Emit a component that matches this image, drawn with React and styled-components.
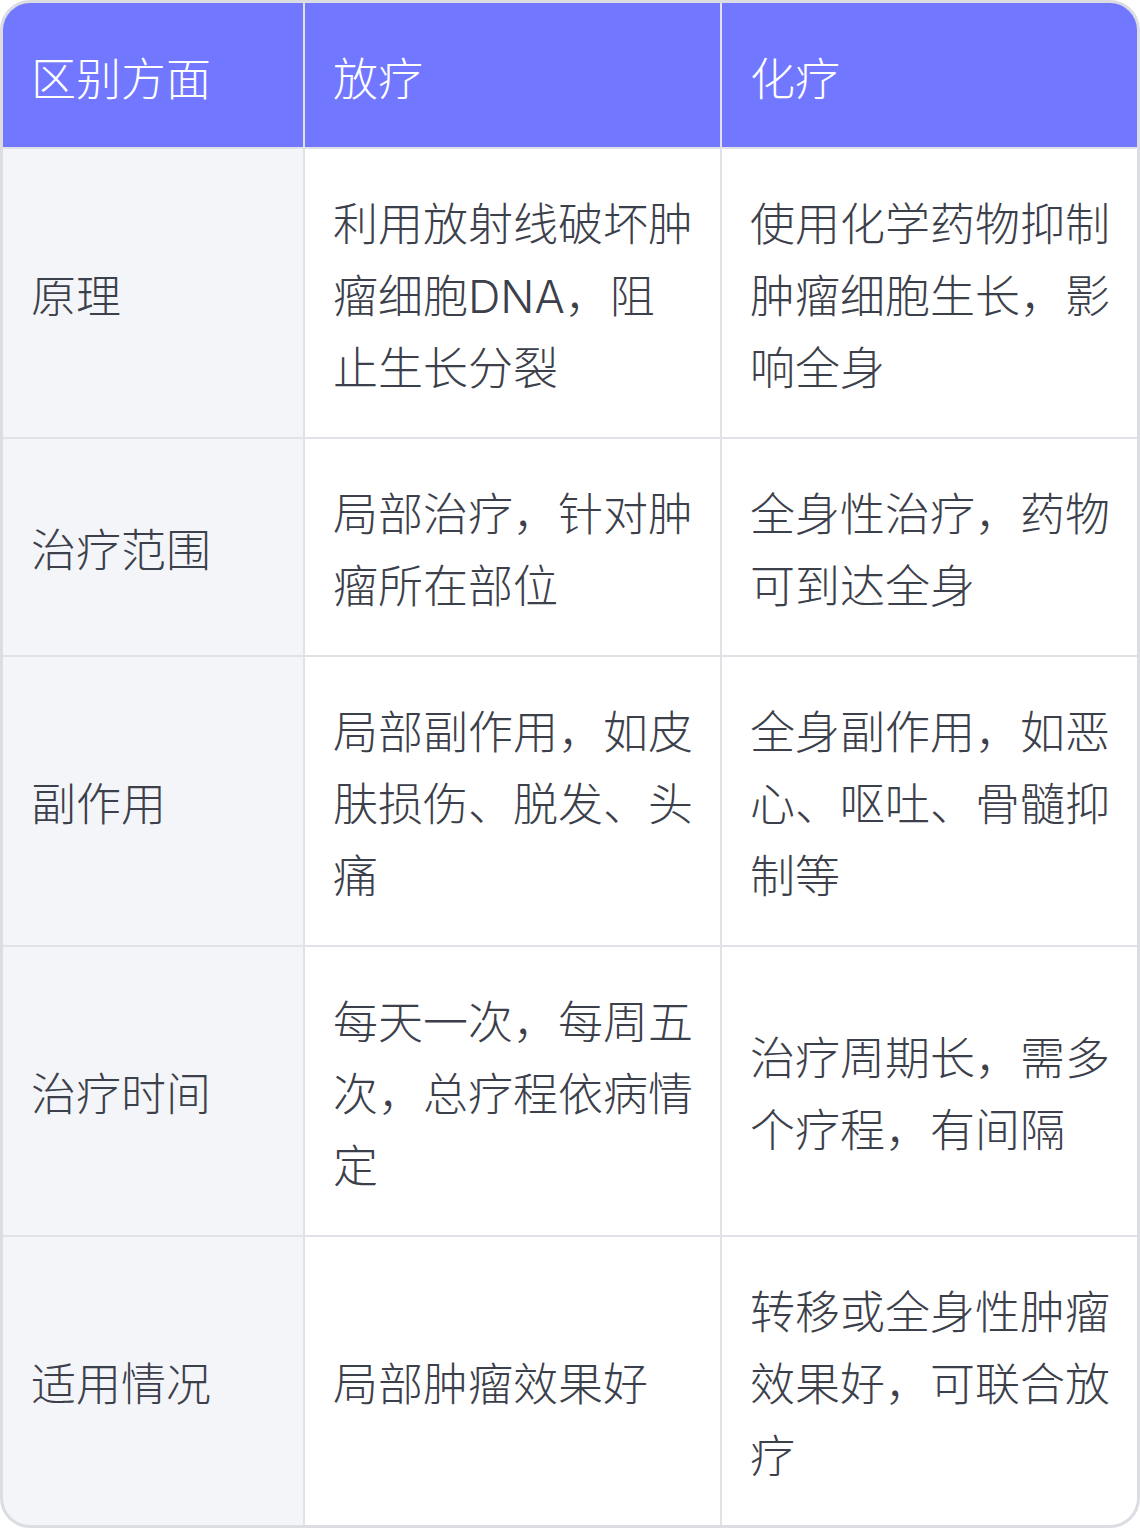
import React from 'react'
import styled, { createGlobalStyle } from 'styled-components';

const GlobalStyle = createGlobalStyle`
    html, body {
        margin: 0;
        padding: 0;
        background: #fff;
    }
    body {
        font-family: "Inter", "Noto Sans CJK SC", "Noto Sans", sans-serif;
    }
`

const headers = ['区别方面', '放疗', '化疗'];

const rows = [
    ['原理', '利用放射线破坏肿瘤细胞DNA，阻止生长分裂', '使用化学药物抑制肿瘤细胞生长，影响全身'],
    ['治疗范围', '局部治疗，针对肿瘤所在部位', '全身性治疗，药物可到达全身'],
    ['副作用', '局部副作用，如皮肤损伤、脱发、头痛', '全身副作用，如恶心、呕吐、骨髓抑制等'],
    ['治疗时间', '每天一次，每周五次，总疗程依病情定', '治疗周期长，需多个疗程，有间隔'],
    ['适用情况', '局部肿瘤效果好', '转移或全身性肿瘤效果好，可联合放疗'],
];

function App() {
    return (
        <>
            <GlobalStyle />
            <Table>
                {headers.map(h => (
                    <HeadCell key={h}>{h}</HeadCell>
                ))}
                {rows.map(row => row.map((cell, i) => (
                    <Cell key={row[0] + i} $label={i === 0}>{cell}</Cell>
                )))}
            </Table>
        </>
    )
}

export default App

const Table = styled.div`
    box-sizing: border-box;
    width: 1140px;
    display: grid;
    grid-template-columns: 300px 415px 1fr;
    gap: 2px;
    background: #e1e2e8;
    border: 3px solid #dcdde2;
    border-radius: 30px;
    overflow: hidden;
`
const HeadCell = styled.div`
    display: flex;
    align-items: center;
    padding: 41px 26px 31px 28px;
    background: #7177ff;
    color: #fff;
    font-size: 45px;
    line-height: 72px;
    font-weight: 300;
`
const Cell = styled.div`
    display: flex;
    align-items: center;
    padding: 40px 26px 32px 28px;
    background: ${p => p.$label ? '#f4f5f9' : '#fff'};
    color: #3c404b;
    font-size: 45px;
    line-height: 72px;
    font-weight: 300;
`
